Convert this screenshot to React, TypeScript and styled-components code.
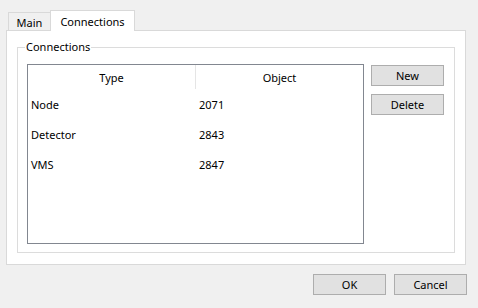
import React from "react";
import styled, { createGlobalStyle } from "styled-components";

const Global = createGlobalStyle`
  html, body { margin: 0; padding: 0; background: #f0f0f0; }
  body { font-family: "Noto Sans", "Open Sans", sans-serif; font-size: 11px; color: #000; }
  * { box-sizing: border-box; }
`;

const Window = styled.div`
  width: 478px;
  height: 308px;
  padding: 10px 12px 0 6px;
  display: flex;
  flex-direction: column;
  background: #f0f0f0;
`;

const TabStrip = styled.div`
  display: flex;
  align-items: flex-end;
  height: 20px;
  padding-left: 2px;
`;

const Tab = styled.div<{ $active?: boolean; $w: number }>`
  width: ${(p) => p.$w}px;
  height: ${(p) => (p.$active ? 21 : 18)}px;
  margin-bottom: ${(p) => (p.$active ? -1 : 0)}px;
  margin-left: ${(p) => (p.$active ? -1 : 0)}px;
  position: relative;
  z-index: ${(p) => (p.$active ? 1 : 0)};
  background: ${(p) => (p.$active ? "#ffffff" : "#f0f0f0")};
  border: 1px solid #d9d9d9;
  border-bottom: none;
  display: flex;
  align-items: center;
  justify-content: center;
  padding-top: ${(p) => (p.$active ? 0 : 1)}px;
`;

const Panel = styled.div`
  height: 235px;
  border: 1px solid #d9d9d9;
  background: #ffffff;
  padding: 16px 10px 11px 10px;
  display: flex;
`;

const GroupBox = styled.div`
  position: relative;
  flex: 1;
  border: 1px solid #dcdcdc;
  padding: 16px 10px 8px 9px;
  display: flex;
  gap: 7px;
`;

const GroupLabel = styled.span`
  position: absolute;
  top: -8px;
  left: 7px;
  padding: 0 1px;
  background: #ffffff;
  line-height: 14px;
`;

const List = styled.div`
  flex: 1;
  border: 1px solid #828790;
  background: #ffffff;
  display: flex;
  flex-direction: column;
`;

const HeaderRow = styled.div`
  display: grid;
  grid-template-columns: 168px 1fr;
  height: 24px;
`;

const HeaderCell = styled.div<{ $divider?: boolean }>`
  display: flex;
  align-items: center;
  justify-content: center;
  border-right: ${(p) => (p.$divider ? "1px solid #e5e5e5" : "none")};
`;

const Row = styled.div`
  display: grid;
  grid-template-columns: 168px 1fr;
  height: 30px;
  align-items: center;
`;

const Cell = styled.div`
  padding-left: 3px;
`;

const ButtonColumn = styled.div`
  width: 73px;
  display: flex;
  flex-direction: column;
  gap: 8px;
  padding-top: 1px;
`;

const Button = styled.button`
  width: 73px;
  height: 21px;
  padding: 0;
  margin: 0;
  background: #e1e1e1;
  border: 1px solid #adadad;
  font: inherit;
  color: #000;
  display: flex;
  align-items: center;
  justify-content: center;
`;

const Footer = styled.div`
  display: flex;
  justify-content: flex-end;
  gap: 8px;
  margin-top: 9px;
  margin-right: -1px;
`;

const rows = [
  { type: "Node", object: "2071" },
  { type: "Detector", object: "2843" },
  { type: "VMS", object: "2847" },
];

export default function App() {
  return (
    <>
      <Global />
      <Window>
        <TabStrip>
          <Tab $w={43}>Main</Tab>
          <Tab $w={85} $active>
            Connections
          </Tab>
        </TabStrip>
        <Panel>
          <GroupBox>
            <GroupLabel>Connections</GroupLabel>
            <List>
              <HeaderRow>
                <HeaderCell $divider>Type</HeaderCell>
                <HeaderCell>Object</HeaderCell>
              </HeaderRow>
              {rows.map((r) => (
                <Row key={r.type}>
                  <Cell>{r.type}</Cell>
                  <Cell>{r.object}</Cell>
                </Row>
              ))}
            </List>
            <ButtonColumn>
              <Button>New</Button>
              <Button>Delete</Button>
            </ButtonColumn>
          </GroupBox>
        </Panel>
        <Footer>
          <Button>OK</Button>
          <Button>Cancel</Button>
        </Footer>
      </Window>
    </>
  );
}
